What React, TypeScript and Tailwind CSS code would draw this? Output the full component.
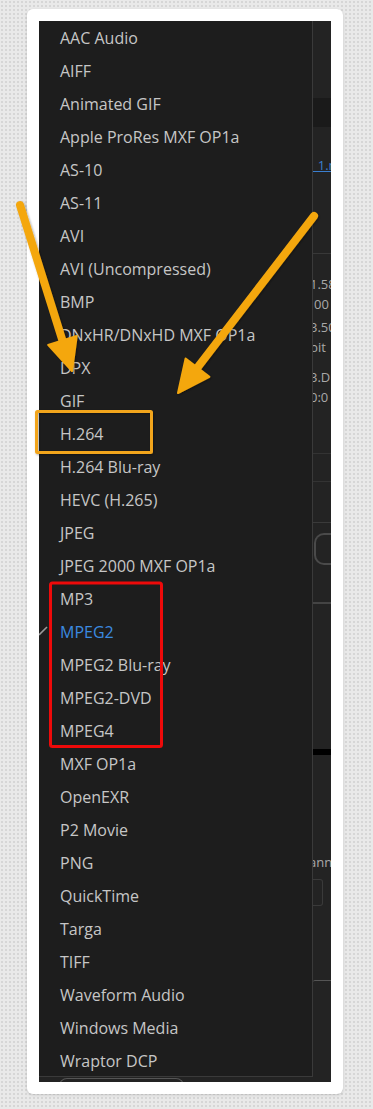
import React from "react";

const items = [
  "AAC Audio",
  "AIFF",
  "Animated GIF",
  "Apple ProRes MXF OP1a",
  "AS-10",
  "AS-11",
  "AVI",
  "AVI (Uncompressed)",
  "BMP",
  "DNxHR/DNxHD MXF OP1a",
  "DPX",
  "GIF",
  "H.264",
  "H.264 Blu-ray",
  "HEVC (H.265)",
  "JPEG",
  "JPEG 2000 MXF OP1a",
  "MP3",
  "MPEG2",
  "MPEG2 Blu-ray",
  "MPEG2-DVD",
  "MPEG4",
  "MXF OP1a",
  "OpenEXR",
  "P2 Movie",
  "PNG",
  "QuickTime",
  "Targa",
  "TIFF",
  "Waveform Audio",
  "Windows Media",
  "Wraptor DCP",
];

function Arrow({ x1, y1, tx, ty, len = 32, half = 15 }: { x1: number; y1: number; tx: number; ty: number; len?: number; half?: number }) {
  const dx = tx - x1;
  const dy = ty - y1;
  const l = Math.hypot(dx, dy);
  const ux = dx / l;
  const uy = dy / l;
  const bx = tx - ux * len;
  const by = ty - uy * len;
  const nx = -uy;
  const ny = ux;
  const p1 = `${bx + nx * half},${by + ny * half}`;
  const p2 = `${bx - nx * half},${by - ny * half}`;
  return (
    <g>
      <line x1={x1} y1={y1} x2={bx + ux * 4} y2={by + uy * 4} stroke="#f4a70e" strokeWidth={8} strokeLinecap="round" />
      <polygon points={`${tx},${ty} ${p1} ${p2}`} fill="#f4a70e" stroke="#f4a70e" strokeWidth={2} strokeLinejoin="round" />
    </g>
  );
}

export default function App() {
  return (
    <div className="relative w-[373px] h-[1109px] overflow-hidden bg-[#e9e9e9] bg-[radial-gradient(#d6d6d6_1px,transparent_1px)] bg-[length:4px_4px] pt-[9px] pl-[27px]" style={{ fontFamily: '"Open Sans", "Noto Sans", sans-serif' }}>
      <div className="w-[316px] h-[1085px] bg-white rounded-[6px] p-3 shadow-[0_1px_3px_rgba(0,0,0,0.15)]">
        <div className="w-[292px] h-[1061px] bg-[#232323] flex overflow-hidden">
          {/* menu column */}
          <div className="w-[274px] flex flex-col">
            <div className="h-[1056px] bg-[#1d1d1d] border-r border-b border-[#3a3a3a] flex flex-col">
              {items.map((it) => (
                <div key={it} className="h-[33px] flex items-center shrink-0">
                  <div className="w-[21px] h-full flex items-center shrink-0">
                    {it === "MPEG2" && (
                      <svg width="21" height="33" viewBox="0 0 21 33">
                        <path d="M0 20 L8 12" stroke="#9a9a9a" strokeWidth="1.6" fill="none" />
                      </svg>
                    )}
                  </div>
                  <span className={`text-[16px] font-medium leading-none tracking-[0px] whitespace-nowrap ${it === "MPEG2" ? "text-[#3b8be0]" : "text-[#c6c6c6]"}`}>{it}</span>
                </div>
              ))}
            </div>
            <div className="flex-1 flex gap-6 pl-5">
              <div className="w-[125px] h-[8px] mt-[1px] border-t border-l border-r border-[#555] rounded-t-[10px]" />
            </div>
          </div>
          {/* underlying panel strip */}
          <div className="flex-1 flex flex-col overflow-hidden text-[13px] leading-none text-[#a9a9a9] whitespace-nowrap">
            <div className="h-[77px] shrink-0" />
            <div className="h-[29px] shrink-0 bg-[#1a1a1a]" />
            <div className="h-[126px] shrink-0 pt-[32px]">
              <span className="text-[#3a7fd0] underline ml-[-1px]">_1.mp4</span>
            </div>
            <div className="h-[1px] shrink-0 bg-[#383838]" />
            <div className="h-[199px] shrink-0 flex flex-col pt-[24px] ml-[-3px]">
              <div className="h-[20px]">1.58</div>
              <div className="h-[23px] ml-[4px]">00</div>
              <div className="h-[20px]">3.50</div>
              <div className="h-[30px]">bit</div>
              <div className="h-[20px]">3.D</div>
              <div className="h-[20px]">0:0</div>
            </div>
            <div className="h-[1px] shrink-0 bg-[#333]" />
            <div className="h-[27px] shrink-0" />
            <div className="h-[1px] shrink-0 bg-[#333]" />
            <div className="h-[40px] shrink-0" />
            <div className="h-[1px] shrink-0 bg-[#3a3a3a]" />
            <div className="h-[10px] shrink-0" />
            <div className="h-[32px] shrink-0 ml-[1px] border-t-2 border-l-2 border-b-2 border-[#4a4a4a] rounded-l-[10px]" />
            <div className="h-[37px] shrink-0" />
            <div className="h-[2px] shrink-0 bg-[#444]" />
            <div className="h-[145px] shrink-0" />
            <div className="h-[6px] shrink-0 bg-black" />
            <div className="h-[102px] shrink-0 pt-[3px] ml-[-4px]">
              <div className="mt-[98px]">ann</div>
            </div>
            <div className="h-[22px] shrink-0" />
            <div className="h-[27px] w-[10px] shrink-0 border border-[#3a3a3a] rounded-r-[3px] border-l-0" />
            <div className="h-[74px] shrink-0" />
            <div className="h-[2px] shrink-0 border-t border-[#555] rounded-tl-[20px]" />
          </div>
        </div>
      </div>

      {/* annotations overlay */}
      <svg className="absolute inset-0 pointer-events-none" width="373" height="1109" viewBox="0 0 373 1109">
        <defs>
          <filter id="sh" x="-20%" y="-20%" width="140%" height="140%">
            <feDropShadow dx="1" dy="1" stdDeviation="1.2" floodColor="#000" floodOpacity="0.35" />
          </filter>
        </defs>
        <g filter="url(#sh)">
          <Arrow x1={20} y1={205} tx={72} ty={371} />
          <Arrow x1={314} y1={216} tx={178} ty={393} />
          <rect x={36.5} y={411.5} width={115} height={41} fill="none" stroke="#f2a51e" strokeWidth={3} rx={1} />
        </g>
        <rect x={50.5} y={583} width={111} height={163.5} fill="none" stroke="#ee0a0a" strokeWidth={3} rx={2} />
      </svg>
    </div>
  );
}
